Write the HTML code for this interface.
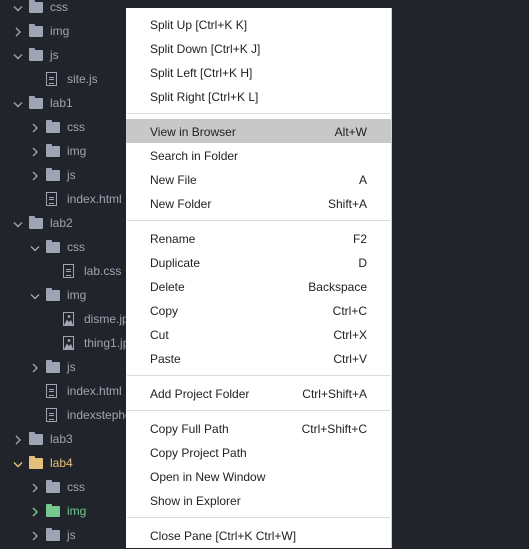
<!DOCTYPE html>
<html><head><style>
body{margin:0;width:529px;height:535px;background:#21252b;overflow:hidden;position:relative;font-family:"Liberation Sans",sans-serif;font-size:12px}
.r{position:absolute;height:24px;line-height:24px;color:#9da5b4;white-space:nowrap}
.ch{position:absolute;top:0;width:10px;height:24px}
.fo{position:absolute;top:7px;width:14px;height:11px;background:#9da5b4;border-radius:1px}
.fo:before{content:"";position:absolute;left:0;top:-2px;width:6px;height:3px;background:inherit;border-radius:1px 1px 0 0}
.fi{position:absolute;top:5px;width:11px;height:14px;border:1px solid #9da5b4;box-sizing:border-box}
.fi:after{content:"";position:absolute;left:2px;top:4px;width:5px;height:5px;border-top:1px solid #9da5b4;border-bottom:1px solid #9da5b4}
.fi:before{content:"";position:absolute;left:2px;top:6px;width:5px;height:1px;background:#9da5b4}
.t{position:absolute;top:0}
#menu{position:absolute;left:126px;top:8px;width:265px;height:540px;background:#fff;border-right:1px solid #d0d0d0}
.m{position:absolute;left:0;width:265px;height:24px;line-height:26px;color:#222;font-size:12px}
.m span{position:absolute;left:24px}
.m b{position:absolute;right:24px;font-weight:normal}
.s{position:absolute;left:1px;width:263px;height:1px;background:#dadada}
</style></head><body>
<div id="tree"></div>
<div id="menu">
<div class="m" style="top:4px"><span>Split Up [Ctrl+K K]</span></div>
<div class="m" style="top:28px"><span>Split Down [Ctrl+K J]</span></div>
<div class="m" style="top:52px"><span>Split Left [Ctrl+K H]</span></div>
<div class="m" style="top:76px"><span>Split Right [Ctrl+K L]</span></div>
<div class="s" style="top:105px"></div>
<div class="m" style="top:111px;background:#c8c8c8"><span>View in Browser</span><b>Alt+W</b></div>
<div class="m" style="top:135px"><span>Search in Folder</span></div>
<div class="m" style="top:159px"><span>New File</span><b>A</b></div>
<div class="m" style="top:183px"><span>New Folder</span><b>Shift+A</b></div>
<div class="s" style="top:212px"></div>
<div class="m" style="top:218px"><span>Rename</span><b>F2</b></div>
<div class="m" style="top:242px"><span>Duplicate</span><b>D</b></div>
<div class="m" style="top:266px"><span>Delete</span><b>Backspace</b></div>
<div class="m" style="top:290px"><span>Copy</span><b>Ctrl+C</b></div>
<div class="m" style="top:314px"><span>Cut</span><b>Ctrl+X</b></div>
<div class="m" style="top:338px"><span>Paste</span><b>Ctrl+V</b></div>
<div class="s" style="top:367px"></div>
<div class="m" style="top:373px"><span>Add Project Folder</span><b>Ctrl+Shift+A</b></div>
<div class="s" style="top:402px"></div>
<div class="m" style="top:408px"><span>Copy Full Path</span><b>Ctrl+Shift+C</b></div>
<div class="m" style="top:432px"><span>Copy Project Path</span></div>
<div class="m" style="top:456px"><span>Open in New Window</span></div>
<div class="m" style="top:480px"><span>Show in Explorer</span></div>
<div class="s" style="top:509px"></div>
<div class="m" style="top:515px"><span>Close Pane [Ctrl+K Ctrl+W]</span></div>
</div>
<script>
var rows=[
["css",0,"v","f"],["img",0,">","f"],["js",0,"v","f"],["site.js",1,"","d"],
["lab1",0,"v","f"],["css",1,">","f"],["img",1,">","f"],["js",1,">","f"],["index.html",1,"","d"],
["lab2",0,"v","f"],["css",1,"v","f"],["lab.css",2,"","d"],["img",1,"v","f"],["disme.jpg",2,"","i"],["thing1.jpg",2,"","i"],
["js",1,">","f"],["index.html",1,"","d"],["indexstephen.html",1,"","d"],["lab3",0,">","f"],["lab4",0,"v","f","#e5c07b"],
["css",1,">","f"],["img",1,">","f","#73c990"],["js",1,">","f"]];
var h="";
rows.forEach(function(r,i){
 var y=i*24-5,c=r[4]||"#9da5b4";
 var x0=r[3]=="f"?12+r[1]*17:29+(r[1]-1)*17;
 h+='<div class="r" style="top:'+y+'px;left:0;width:126px;color:'+c+'">';
 if(r[2]){
  var p=r[2]=="v"?'M1 3.5 L5 7.5 L9 3.5':'M3 1 L7 5 L3 9';
  h+='<svg class="ch" style="left:'+(x0+1)+'px;top:8px;height:10px" viewBox="0 0 10 10"><path d="'+p+'" stroke="'+c+'" stroke-width="1.4" fill="none"/></svg>';
 }
 if(r[3]=="f"){h+='<div class="fo" style="left:'+(x0+17)+'px;background:'+c+'"></div><div class="t" style="left:'+(x0+38)+'px">'+r[0]+'</div>';}
 else{var fx=46+(r[1]-1)*17;
  if(r[3]=="i") h+='<svg style="position:absolute;left:'+fx+'px;top:5px" width="11" height="14" viewBox="0 0 11 14"><rect x="0.5" y="0.5" width="10" height="13" fill="none" stroke="#9da5b4"/><path d="M1 13 L4 7.5 L6 10 L8 8 L10 13Z" fill="#9da5b4"/><circle cx="6" cy="4.5" r="1.4" fill="#9da5b4"/></svg>';
  else h+='<div class="fi" style="left:'+fx+'px"></div>';
  h+='<div class="t" style="left:'+(fx+21)+'px">'+r[0]+'</div>';}
 h+='</div>';
});
document.getElementById("tree").innerHTML=h;
</script>
</body></html>
